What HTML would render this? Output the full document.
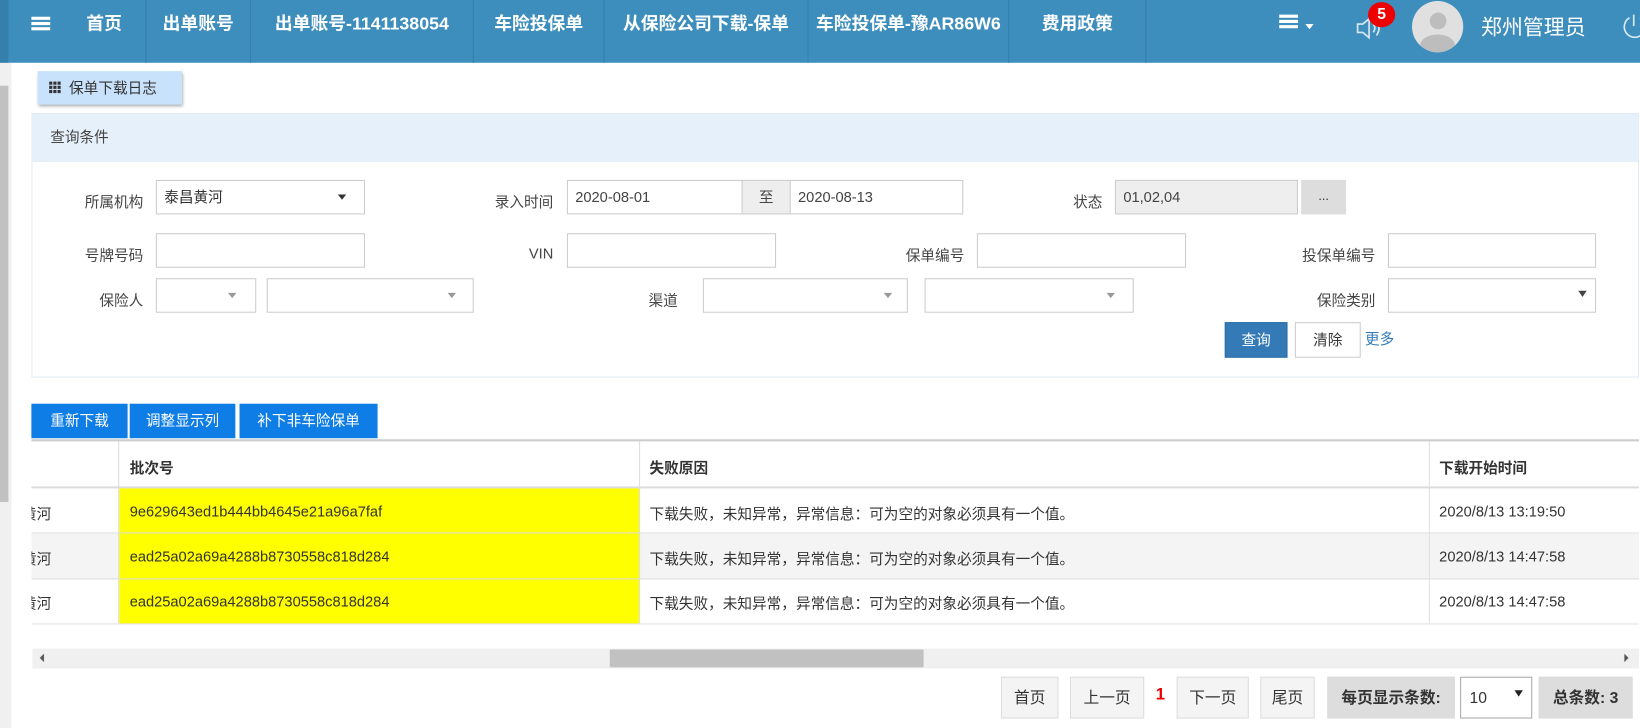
<!DOCTYPE html>
<html><head><meta charset="utf-8"><style>
*{box-sizing:border-box;margin:0;padding:0}
html,body{width:1640px;height:696px;overflow:hidden;background:#fff}
#w{position:absolute;left:0;top:0;width:1568px;height:666px;transform:scale(1.04592);transform-origin:0 0;font-family:"Liberation Sans","Noto Sans CJK SC",sans-serif;font-size:14px;color:#333}
.a{position:absolute}
.nav{left:0;top:0;width:1568px;height:60px;background:#3d8ebd}
.ni{position:absolute;top:0;height:60px;line-height:46px;color:#fff;font-weight:bold;font-size:17px;border-right:1px solid #347fab;text-align:center}
.lbl{position:absolute;text-align:right;font-size:14px;color:#444}
.inp{position:absolute;border:1px solid #ccc;background:#fff;height:33px;line-height:31px;padding-left:7px;font-size:14px;color:#444}
.tri{position:absolute;width:0;height:0;border-left:4px solid transparent;border-right:4px solid transparent;border-top:5px solid #999}
.bb{position:absolute;top:386px;height:33px;line-height:33px;background:#0e7de6;color:#fff;font-size:14px;text-align:center}
.pg{position:absolute;top:647px;height:40px;line-height:40px;border:1px solid #ddd;background:#f4f4f4;text-align:center;font-size:15px;color:#333}
.clip{position:absolute;left:30px;width:83px;height:22px;overflow:hidden}
.clip span{position:absolute;left:-9px;top:0;white-space:nowrap}
</style></head><body><div id="w">
<div class="a nav"></div>
<div class="a" style="left:0;top:0;width:8px;height:60px;background:#347fab"></div>
<div class="a" style="left:30px;top:16px;width:18px;height:3px;background:#fff;box-shadow:0 5px 0 #fff,0 10px 0 #fff"></div>
<div class="ni" style="left:60px;width:80px">首页</div>
<div class="ni" style="left:140px;width:100px">出单账号</div>
<div class="ni" style="left:240px;width:213px">出单账号-1141138054</div>
<div class="ni" style="left:453px;width:125px">车险投保单</div>
<div class="ni" style="left:578px;width:195px">从保险公司下载-保单</div>
<div class="ni" style="left:773px;width:192px">车险投保单-豫AR86W6</div>
<div class="ni" style="left:965px;width:131px">费用政策</div>
<div class="a" style="left:1223px;top:14px;width:18px;height:3px;background:#fff;box-shadow:0 5px 0 #fff,0 10px 0 #fff"></div>
<div class="tri" style="left:1248px;top:23px;border-top-color:#fff"></div>
<svg class="a" style="left:1295px;top:14px" width="32" height="26" viewBox="0 0 32 26"><path d="M3 9h5l6-5v18l-6-5H3z" fill="none" stroke="#d8e8f2" stroke-width="1.6"/><path d="M18 9q3 4 0 8M21 6q5 7 0 14" fill="none" stroke="#d8e8f2" stroke-width="1.6"/></svg>
<div class="a" style="left:1308px;top:2px;width:26px;height:24px;border-radius:50%;background:#e00;color:#fff;font-weight:bold;font-size:15px;text-align:center;line-height:24px">5</div>
<div class="a" style="left:1350px;top:1px;width:49px;height:49px;border-radius:50%;background:#e0e0e0;overflow:hidden"><div class="a" style="left:17px;top:11px;width:16px;height:16px;border-radius:50%;background:#bdbdbd"></div><div class="a" style="left:8px;top:32px;width:33px;height:20px;border-radius:50%;background:#bdbdbd"></div></div>
<div class="a" style="left:1416px;top:10px;color:#fff;font-size:20px">郑州管理员</div>
<svg class="a" style="left:1548px;top:12px" width="20" height="30"><path d="M10 5a10 10 0 1 0 10 0" fill="none" stroke="#d8e8f2" stroke-width="1.6"/><path d="M14 2v11" stroke="#d8e8f2" stroke-width="1.6"/></svg>

<div class="a" style="left:0;top:60px;width:11px;height:636px;background:#f0f0f0"></div>
<div class="a" style="left:0;top:82px;width:8px;height:398px;background:#c1c1c1"></div>

<div class="a" style="left:36px;top:68px;width:138px;height:32px;background:#c9e2fb;box-shadow:1px 2px 3px #aaa;line-height:32px;padding-left:30px;font-size:14px;color:#333">保单下载日志</div>
<div class="a" style="left:47px;top:78px;width:3px;height:3px;background:#333;box-shadow:4px 0 #333,8px 0 #333,0 4px #333,4px 4px #333,8px 4px #333,0 8px #333,4px 8px #333,8px 8px #333"></div>

<div class="a" style="left:30px;top:108px;width:1537px;height:253px;border:1px solid #e1eaf4"></div>
<div class="a" style="left:31px;top:109px;width:1535px;height:46px;background:#e6f0fa;line-height:44px;padding-left:17px;font-size:14px;color:#444">查询条件</div>

<div class="lbl" style="left:40px;width:97px;top:183px">所属机构</div>
<div class="inp" style="left:149px;top:172px;width:200px;color:#333">泰昌黄河</div>
<div class="tri" style="left:323px;top:186px;border-top-color:#333"></div>
<div class="lbl" style="left:430px;width:99px;top:183px">录入时间</div>
<div class="inp" style="left:542px;top:172px;width:168px">2020-08-01</div>
<div class="inp" style="left:709px;top:172px;width:47px;background:#eee;padding:0;text-align:center">至</div>
<div class="inp" style="left:755px;top:172px;width:166px">2020-08-13</div>
<div class="lbl" style="left:960px;width:94px;top:183px">状态</div>
<div class="inp" style="left:1066px;top:172px;width:175px;background:#eee">01,02,04</div>
<div class="a" style="left:1244px;top:172px;width:43px;height:33px;background:#ddd;text-align:center;line-height:30px;font-size:12px">...</div>

<div class="lbl" style="left:40px;width:97px;top:234px">号牌号码</div>
<div class="inp" style="left:149px;top:223px;width:200px"></div>
<div class="lbl" style="left:430px;width:99px;top:234px">VIN</div>
<div class="inp" style="left:542px;top:223px;width:200px"></div>
<div class="lbl" style="left:820px;width:102px;top:234px">保单编号</div>
<div class="inp" style="left:934px;top:223px;width:200px"></div>
<div class="lbl" style="left:1200px;width:115px;top:234px">投保单编号</div>
<div class="inp" style="left:1327px;top:223px;width:199px"></div>

<div class="lbl" style="left:40px;width:97px;top:277px">保险人</div>
<div class="inp" style="left:149px;top:266px;width:96px"></div><div class="tri" style="left:218px;top:280px"></div>
<div class="inp" style="left:255px;top:266px;width:198px"></div><div class="tri" style="left:428px;top:280px"></div>
<div class="lbl" style="left:560px;width:88px;top:277px">渠道</div>
<div class="inp" style="left:672px;top:266px;width:196px"></div><div class="tri" style="left:845px;top:280px"></div>
<div class="inp" style="left:884px;top:266px;width:200px"></div><div class="tri" style="left:1058px;top:280px"></div>
<div class="lbl" style="left:1200px;width:115px;top:277px">保险类别</div>
<div class="inp" style="left:1327px;top:266px;width:199px"></div><div class="tri" style="left:1509px;top:278px;border-top-color:#444;border-top-width:6px"></div>

<div class="a" style="left:1171px;top:308px;width:60px;height:34px;background:#337ab7;border:1px solid #2e6da4;color:#fff;text-align:center;line-height:32px">查询</div>
<div class="a" style="left:1238px;top:308px;width:63px;height:34px;border:1px solid #ccc;text-align:center;line-height:32px">清除</div>
<div class="a" style="left:1305px;top:314px;color:#337ab7">更多</div>

<div class="bb" style="left:30px;width:92px">重新下载</div>
<div class="bb" style="left:124px;width:101px">调整显示列</div>
<div class="bb" style="left:229px;width:132px">补下非车险保单</div>

<div class="a" style="left:30px;top:420px;width:1537px;height:2px;background:#ccc"></div>
<div class="a" style="left:30px;top:465px;width:1537px;height:2px;background:#ddd"></div>
<div class="a" style="left:30px;top:510px;width:1537px;height:43px;background:#f4f4f4"></div>
<div class="a" style="left:30px;top:509px;width:1537px;height:1px;background:#ddd"></div>
<div class="a" style="left:30px;top:553px;width:1537px;height:1px;background:#ddd"></div>
<div class="a" style="left:30px;top:596px;width:1537px;height:1px;background:#ddd"></div>
<div class="a" style="left:114px;top:467px;width:497px;height:129px;background:#ff0"></div>
<div class="a" style="left:114px;top:509px;width:497px;height:1px;background:#ddd"></div>
<div class="a" style="left:114px;top:553px;width:497px;height:1px;background:#ddd"></div>
<div class="a" style="left:113px;top:422px;width:1px;height:174px;background:#ddd"></div>
<div class="a" style="left:611px;top:422px;width:1px;height:174px;background:#ddd"></div>
<div class="a" style="left:1366px;top:422px;width:1px;height:174px;background:#ddd"></div>
<div class="a" style="left:124px;top:437px;font-weight:bold">批次号</div>
<div class="a" style="left:621px;top:437px;font-weight:bold">失败原因</div>
<div class="a" style="left:1376px;top:437px;font-weight:bold">下载开始时间</div>

<div class="clip" style="top:481px"><span>黄河</span></div>
<div class="clip" style="top:524px"><span>黄河</span></div>
<div class="clip" style="top:567px"><span>黄河</span></div>
<div class="a" style="left:124px;top:481px">9e629643ed1b444bb4645e21a96a7faf</div>
<div class="a" style="left:124px;top:524px">ead25a02a69a4288b8730558c818d284</div>
<div class="a" style="left:124px;top:567px">ead25a02a69a4288b8730558c818d284</div>
<div class="a" style="left:621px;top:481px">下载失败，未知异常，异常信息：可为空的对象必须具有一个值。</div>
<div class="a" style="left:621px;top:524px">下载失败，未知异常，异常信息：可为空的对象必须具有一个值。</div>
<div class="a" style="left:621px;top:567px">下载失败，未知异常，异常信息：可为空的对象必须具有一个值。</div>
<div class="a" style="left:1376px;top:481px">2020/8/13 13:19:50</div>
<div class="a" style="left:1376px;top:524px">2020/8/13 14:47:58</div>
<div class="a" style="left:1376px;top:567px">2020/8/13 14:47:58</div>

<div class="a" style="left:31px;top:620px;width:1536px;height:19px;background:#f0f0f0"></div>
<div class="a" style="left:583px;top:621px;width:300px;height:17px;background:#c1c1c1"></div>
<div class="a" style="left:38px;top:625px;border-top:4px solid transparent;border-bottom:4px solid transparent;border-right:4px solid #555"></div>
<div class="a" style="left:1553px;top:625px;border-top:4px solid transparent;border-bottom:4px solid transparent;border-left:4px solid #555"></div>

<div class="pg" style="left:957px;width:55px">首页</div>
<div class="pg" style="left:1023px;width:71px">上一页</div>
<div class="a" style="left:1105px;top:656px;color:#e00;font-weight:bold;font-size:16px">1</div>
<div class="pg" style="left:1125px;width:69px">下一页</div>
<div class="pg" style="left:1205px;width:52px">尾页</div>
<div class="pg" style="left:1269px;width:122px;background:#ddd;font-weight:bold">每页显示条数:</div>
<div class="pg" style="left:1396px;width:69px;background:#fff;border-color:#aaa;text-align:left;padding-left:8px">10</div>
<div class="tri" style="left:1448px;top:660px;border-top-color:#222;border-top-width:6px"></div>
<div class="pg" style="left:1471px;width:90px;background:#ddd;font-weight:bold">总条数: 3</div>
</div></body></html>
